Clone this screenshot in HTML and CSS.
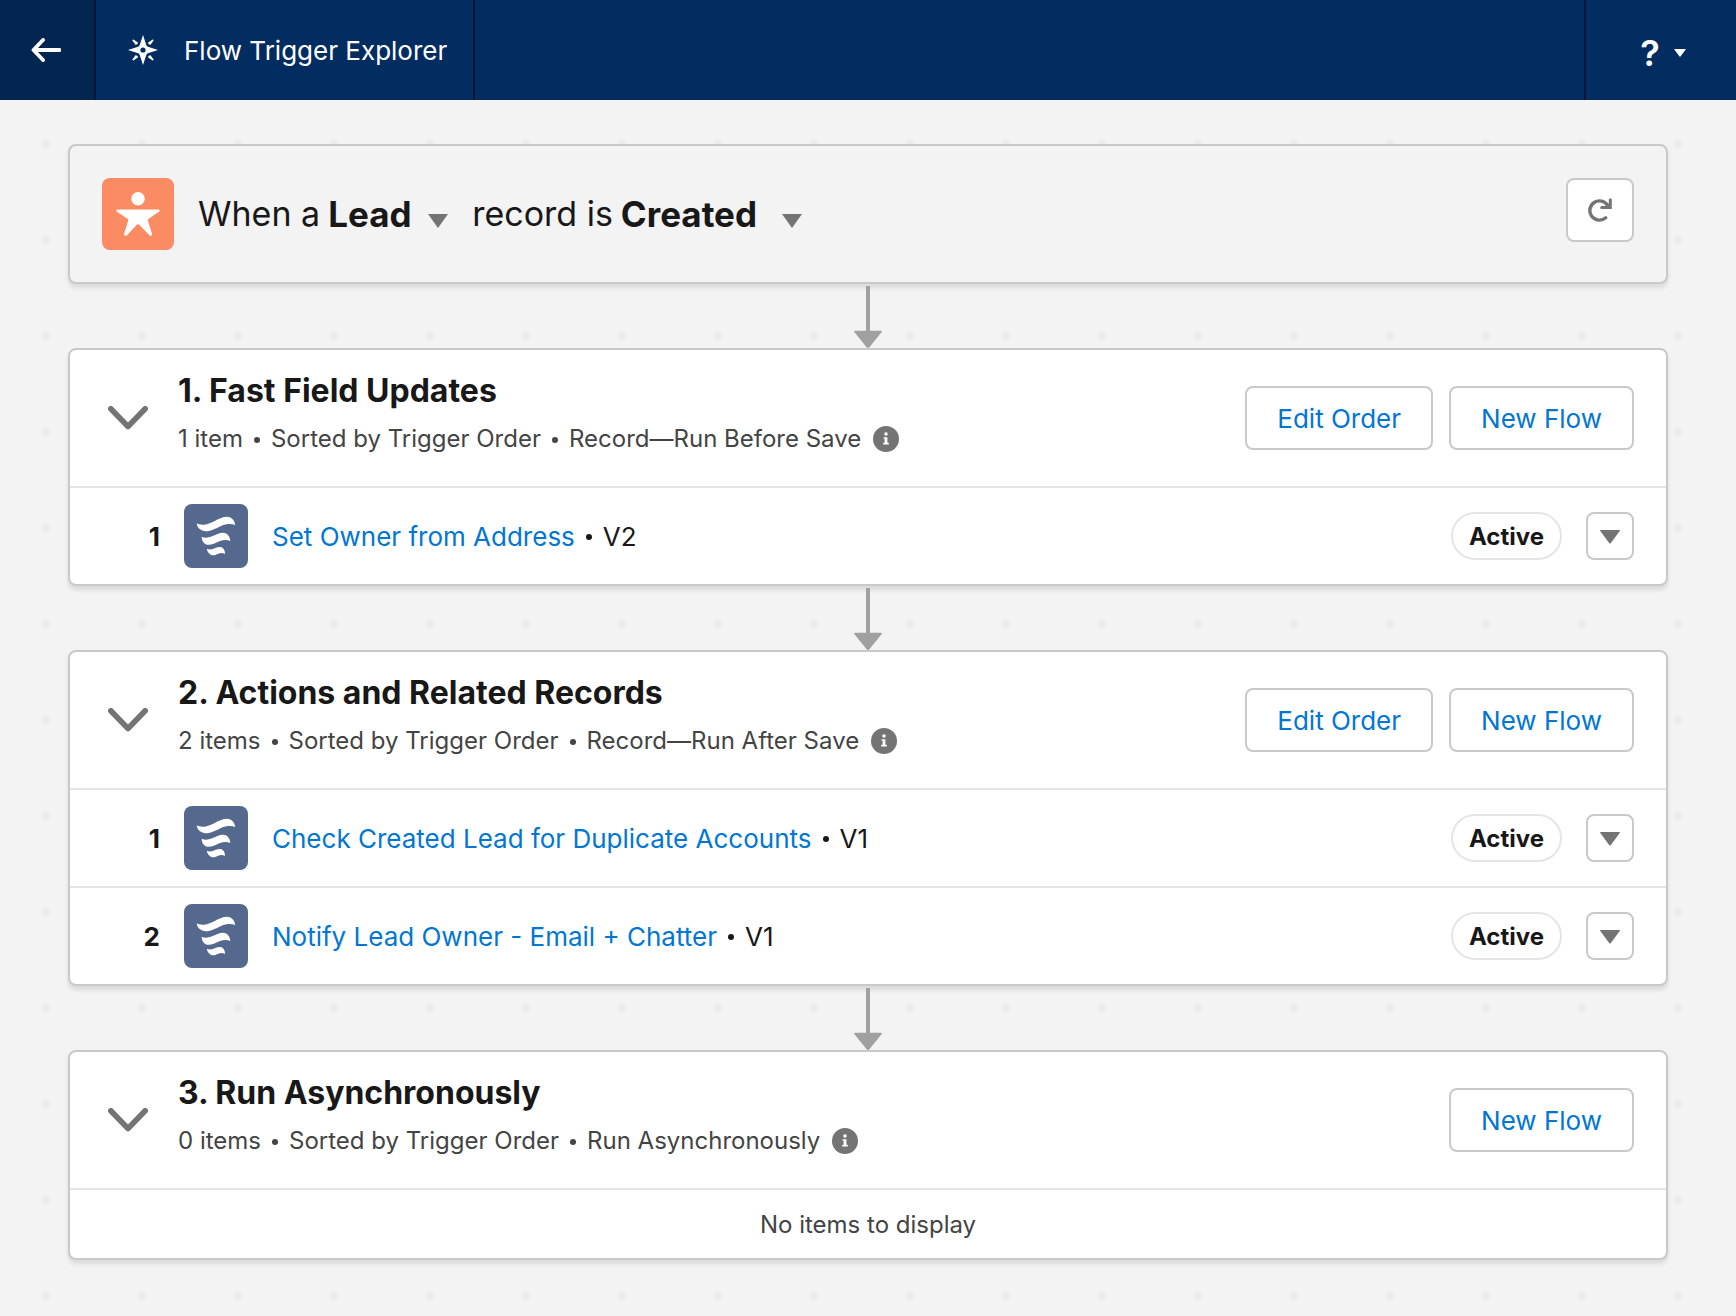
FILE: index.html
```html
<!DOCTYPE html>
<html lang="en">
<head>
  <meta charset="utf-8">
  <meta name="viewport" content="width=device-width, initial-scale=1">
  <title>Flow Trigger Explorer</title>
  <link rel="stylesheet" href="styles.css">
</head>
<body>
  <svg class="sprite" aria-hidden="true">
    <symbol id="chevron" viewBox="0 0 40 24">
      <path d="M2.8 2.8 20 20.500 37.200 2.800" fill="none" stroke="currentColor" stroke-width="5.600" stroke-linecap="round" stroke-linejoin="round"/>
    </symbol>
    <symbol id="down" viewBox="0 0 20 14">
      <path d="M.6 0h18.800q1 .2.300 1.100L10.700 13.200q-.7.800-1.400 0L.3 1.100Q-.4.200.6 0z" fill="currentColor"/>
    </symbol>
    <symbol id="info" viewBox="0 0 26 26">
      <circle cx="13" cy="13" r="13" fill="currentColor"/>
      <circle cx="13" cy="8" r="1.800" fill="#fff"/>
      <path d="M10.600 11.200h3.800v5.600h1.400v1.600h-5.600v-1.600h1.400v-4h-1z" fill="#fff"/>
    </symbol>
    <symbol id="flow" viewBox="0 0 64 64">
      <g fill="#fff">
        <path d="M12.700 19.300C16.500 21.600 22 21 27 18.700c6-2.800 11-6 15.700-6 4.500 0 7.800 3 8.500 8.200-3.500-1.400-8.700-1.500-14.200 1C31.500 24.400 27 27.200 22 27.200c-5 0-8.900-3.400-9.300-7.900z"/>
        <path d="M17.700 32.700c3 1.600 6.300 1.200 9.800-.1 4.300-1.700 8-3.900 11.500-3.900 4 0 7 3.200 7.300 8.300-3.200-1.500-6.800-1.500-10.800.2-4 1.700-7.500 3.600-11 3.600-4 0-6.800-3.400-6.800-8.100z"/>
        <path d="M22.900 44.700c2.200 1 4.400.8 6.600 0 2.600-1 4.800-1.900 7-1.600 2.700.4 4.700 3.200 4.400 6.900-2.400-1.300-4.500-1.100-6.700-.2-1.700.8-3.200 1.600-5 1.500-3.200-.2-6-3.100-6.300-6.600z"/>
      </g>
    </symbol>
    <symbol id="arrow" viewBox="0 0 28 64">
      <path d="M12 2h4v45h-4z" fill="currentColor"/>
      <path d="M1 46.800h26q1.300.2.500 1.400L15.600 63q-1.600 1.800-3.200 0L.5 48.200Q-.3 47 1 46.800z" fill="currentColor"/>
    </symbol>
  </svg>

  <header class="topbar">
    <a class="topbar-back" href="#" aria-label="Back">
      <svg width="30" height="24" viewBox="0 0 30 24"><path d="M12 2 2.500 12 12 22M3 12h25.500" fill="none" stroke="#fff" stroke-width="3.800" stroke-linecap="round" stroke-linejoin="round"/></svg>
    </a>
    <div class="topbar-title">
      <svg width="30" height="30" viewBox="0 0 30 30" fill="#fff">
        <path fill-rule="evenodd" d="M15 0l3.300 10.100q.4 1.200 1.600 1.600L30 15l-10.100 3.300q-1.200.4-1.600 1.600L15 30l-3.300-10.100q-.4-1.200-1.600-1.600L0 15l10.100-3.300q1.200-.4 1.600-1.600zM15 12.400a2.600 2.600 0 1 0 0 5.200 2.600 2.600 0 0 0 0-5.200z"/>
        <path d="M4.400 5.400q0-1 1-1l4.400 3.200q.3 1.200-.6 1.700t-1.700.4zM25.600 5.400q0-1-1-1l-4.400 3.200q-.3 1.200.6 1.700t1.700.4zM4.400 24.600q0 1 1 1l4.400-3.200q.3-1.200-.6-1.700t-1.700-.4zM25.600 24.600q0 1-1 1l-4.400-3.200q-.3-1.200.6-1.700t1.700-.4z"/>
      </svg>
      <h1>Flow Trigger Explorer</h1>
    </div>
    <button class="topbar-help" type="button" aria-label="Help" aria-haspopup="menu">
      <span>?</span>
      <svg width="12" height="8"><use href="#down"/></svg>
    </button>
  </header>

  <main class="canvas">
    <section class="card trigger">
      <span class="lead-icon">
        <svg width="72" height="72" viewBox="0 0 72 72" fill="#fff">
          <circle cx="36" cy="20.700" r="6.800"/>
          <path d="M15.200 31.600h41.600q1.600.4.600 1.900L46.600 40.800q-1 .8-.7 2l4.200 13.200q0 2-2 1.900L37 46.600q-1-.9-2 0L24.500 57.700q-2 .6-2.600-1.500l4.300-13.400q.3-1.200-.7-2L14.500 33.500q-.9-1.400.7-1.900z"/>
        </svg>
      </span>
      <div class="sentence">
        <label for="object">When a</label>
        <select id="object"><option>Lead</option></select>
        <label class="sentence-second" for="event">record is</label>
        <select id="event" class="select-wide"><option>Created</option></select>
      </div>
      <button class="btn btn-refresh" type="button" aria-label="Refresh">
        <svg width="24" height="24" viewBox="0 0 24 24" fill="none" stroke="currentColor" stroke-width="3.400" stroke-linecap="round"><path d="M17.700 19.800A9.600 9.600 0 1 1 19.800 7.800"/><path d="M22.300 1.700v7.900h-8.600" stroke-width="3"/><path d="M17 8.500l5-4v5z" fill="currentColor" stroke="none"/></svg>
      </button>
    </section>

    <svg class="connector" width="28" height="64" aria-hidden="true"><use href="#arrow"/></svg>

    <section class="card">
      <div class="card-head">
        <button class="toggle" type="button" aria-expanded="true" aria-label="Collapse section"><svg width="40" height="24"><use href="#chevron"/></svg></button>
        <div class="card-text">
          <h2>1. Fast Field Updates</h2>
          <p class="meta"><span>1 item</span><i class="dot"></i><span>Sorted by Trigger Order</span><i class="dot"></i><span>Record—Run Before Save</span><svg class="info" width="26" height="26"><use href="#info"/></svg></p>
        </div>
        <div class="actions">
          <button class="btn" type="button">Edit Order</button>
          <button class="btn" type="button">New Flow</button>
        </div>
      </div>
      <ul class="flows">
        <li class="flow">
          <span class="order">1</span>
          <span class="flow-icon"><svg width="64" height="64"><use href="#flow"/></svg></span>
          <div class="flow-name"><a href="#">Set Owner from Address</a><i class="dot"></i><span>V2</span></div>
          <span class="status">Active</span>
          <button class="btn btn-menu" type="button" aria-label="Show actions" aria-haspopup="menu"><svg width="20" height="14"><use href="#down"/></svg></button>
        </li>
      </ul>
    </section>

    <svg class="connector" width="28" height="64" aria-hidden="true"><use href="#arrow"/></svg>

    <section class="card">
      <div class="card-head">
        <button class="toggle" type="button" aria-expanded="true" aria-label="Collapse section"><svg width="40" height="24"><use href="#chevron"/></svg></button>
        <div class="card-text">
          <h2>2. Actions and Related Records</h2>
          <p class="meta"><span>2 items</span><i class="dot"></i><span>Sorted by Trigger Order</span><i class="dot"></i><span>Record—Run After Save</span><svg class="info" width="26" height="26"><use href="#info"/></svg></p>
        </div>
        <div class="actions">
          <button class="btn" type="button">Edit Order</button>
          <button class="btn" type="button">New Flow</button>
        </div>
      </div>
      <ul class="flows">
        <li class="flow">
          <span class="order">1</span>
          <span class="flow-icon"><svg width="64" height="64"><use href="#flow"/></svg></span>
          <div class="flow-name"><a href="#">Check Created Lead for Duplicate Accounts</a><i class="dot"></i><span>V1</span></div>
          <span class="status">Active</span>
          <button class="btn btn-menu" type="button" aria-label="Show actions" aria-haspopup="menu"><svg width="20" height="14"><use href="#down"/></svg></button>
        </li>
        <li class="flow">
          <span class="order">2</span>
          <span class="flow-icon"><svg width="64" height="64"><use href="#flow"/></svg></span>
          <div class="flow-name"><a href="#">Notify Lead Owner - Email + Chatter</a><i class="dot"></i><span>V1</span></div>
          <span class="status">Active</span>
          <button class="btn btn-menu" type="button" aria-label="Show actions" aria-haspopup="menu"><svg width="20" height="14"><use href="#down"/></svg></button>
        </li>
      </ul>
    </section>

    <svg class="connector" width="28" height="64" aria-hidden="true"><use href="#arrow"/></svg>

    <section class="card">
      <div class="card-head">
        <button class="toggle" type="button" aria-expanded="true" aria-label="Collapse section"><svg width="40" height="24"><use href="#chevron"/></svg></button>
        <div class="card-text">
          <h2>3. Run Asynchronously</h2>
          <p class="meta"><span>0 items</span><i class="dot"></i><span>Sorted by Trigger Order</span><i class="dot"></i><span>Run Asynchronously</span><svg class="info" width="26" height="26"><use href="#info"/></svg></p>
        </div>
        <div class="actions">
          <button class="btn" type="button">New Flow</button>
        </div>
      </div>
      <p class="empty">No items to display</p>
    </section>
  </main>
</body>
</html>
```

FILE: styles.css
```css
* {
  box-sizing: border-box;
}

body {
  margin: 0;
  min-height: 100vh;
  display: flex;
  flex-direction: column;
  font-family: Inter, "Liberation Sans", sans-serif;
  font-size: 26px;
  color: #181818;
  background: #f3f3f3;
}

h1,
h2,
p,
ul {
  margin: 0;
  padding: 0;
}

button,
select {
  font: inherit;
  cursor: pointer;
}

svg {
  display: block;
  flex: none;
}

.sprite {
  position: absolute;
  width: 0;
  height: 0;
}

/* Top bar */

.topbar {
  display: flex;
  height: 100px;
  background: #032d60;
  color: #fff;
}

.topbar-back {
  display: flex;
  align-items: center;
  justify-content: center;
  width: 96px;
  padding-right: 2px;
  background: #022650;
  border-right: 2px solid #01163a;
}

.topbar-title {
  display: flex;
  align-items: center;
  gap: 26px;
  padding: 0 26px 0 32px;
  border-right: 2px solid #01163a;
}

.topbar-title h1 {
  padding-top: 2px;
  font-size: 26px;
  line-height: 36px;
  font-weight: 400;
}

.topbar-help {
  display: flex;
  align-items: center;
  justify-content: center;
  gap: 14px;
  width: 152px;
  margin-left: auto;
  padding: 6px 0 0 4px;
  border: 0;
  border-left: 2px solid #01163a;
  background: none;
  color: #fff;
  font-size: 36px;
  font-weight: 600;
}

/* Canvas */

.canvas {
  flex: 1;
  display: flex;
  flex-direction: column;
  padding: 44px 68px 56px;
  background-image: radial-gradient(circle, #ebebea 0, #ebebea 4px, transparent 4px);
  background-size: 96px 96px;
  background-position: -2px -4px;
}

.connector {
  align-self: center;
  color: #a0a0a0;
  z-index: 1;
}

.card {
  border: 2px solid #c9c9c9;
  border-radius: 8px;
  background: #fff;
  box-shadow: 0 4px 4px rgba(0, 0, 0, .1);
}

/* Trigger sentence */

.trigger {
  display: flex;
  align-items: center;
  gap: 24px;
  padding: 32px;
  background: #f3f3f3;
}

.lead-icon {
  border-radius: 8px;
  background: #fa8b62;
}

.sentence {
  flex: 1;
  display: flex;
  align-items: center;
  gap: 8px;
  font-size: 34px;
  line-height: 48px;
}

.sentence-second {
  margin-left: 16px;
}

.sentence select {
  appearance: none;
  height: 48px;
  padding: 0 36px 0 0;
  border: 0;
  color: #181818;
  font-size: 35px;
  font-weight: 700;
  background: url("data:image/svg+xml,%3Csvg xmlns='http://www.w3.org/2000/svg' width='20' height='14'%3E%3Cpath d='M0 0h20L10 14z' fill='%23747474'/%3E%3C/svg%3E") no-repeat right 24px;
}

.sentence .select-wide {
  padding-right: 44px;
}

/* Buttons */

.btn {
  display: flex;
  align-items: center;
  justify-content: center;
  height: 64px;
  padding: 0 30px;
  border: 2px solid #c9c9c9;
  border-radius: 8px;
  background: #fff;
  color: #0176d3;
}

.btn-refresh {
  align-self: flex-start;
  width: 68px;
  padding: 0;
  color: #747474;
}

.btn-menu {
  width: 48px;
  height: 48px;
  padding: 2px 0 0;
  color: #747474;
}

/* Card header */

.card-head {
  display: flex;
  align-items: center;
  min-height: 136px;
  padding: 0 32px;
}

.toggle {
  width: 48px;
  height: 48px;
  padding: 0 0 0 6px;
  margin-right: 28px;
  border: 0;
  background: none;
  color: #747474;
}

.card-text {
  flex: 1;
  padding-bottom: 8px;
}

.card-text h2 {
  font-size: 32px;
  line-height: 40px;
  font-weight: 700;
}

.meta {
  display: flex;
  align-items: center;
  margin-top: 10px;
  font-size: 24px;
  line-height: 36px;
  color: #444;
}

.dot {
  width: 6px;
  height: 6px;
  margin: 2px 11px 0;
  border-radius: 50%;
  background: currentColor;
}

.info {
  margin-left: 12px;
  color: #747474;
}

.actions {
  display: flex;
  gap: 16px;
}

/* Flow rows */

.flows {
  list-style: none;
}

.flow {
  display: flex;
  align-items: center;
  gap: 24px;
  height: 98px;
  padding: 0 32px;
  border-top: 2px solid #e5e5e5;
}

.order {
  width: 58px;
  text-align: right;
  font-weight: 700;
}

.flow-icon {
  border-radius: 8px;
  background: #54698d;
}

.flow-name {
  flex: 1;
  display: flex;
  align-items: center;
}

.flow-name a {
  color: #0176d3;
  text-decoration: none;
}

.status {
  display: flex;
  align-items: center;
  height: 48px;
  padding: 0 16px;
  border: 2px solid #e5e5e5;
  border-radius: 24px;
  font-size: 24px;
  font-weight: 700;
}

.empty {
  padding: 17px 32px 15px;
  border-top: 2px solid #e5e5e5;
  font-size: 24px;
  line-height: 36px;
  text-align: center;
  color: #444;
}
```
